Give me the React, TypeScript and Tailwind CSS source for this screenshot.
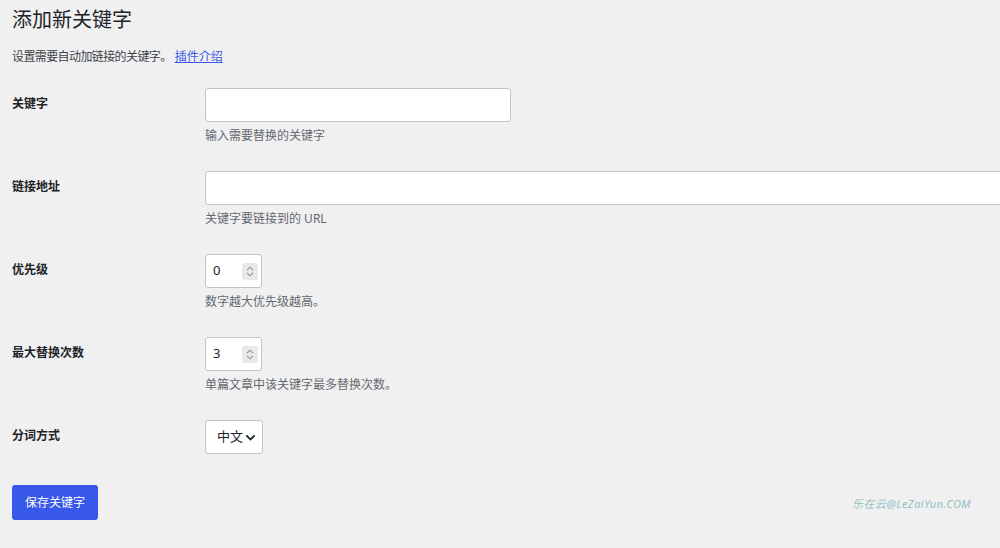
import React from "react";

const font = { fontFamily: '"Noto Sans", "Noto Sans CJK SC", sans-serif' };

function Spinner() {
  return (
    <div className="w-[16px] h-[17px] bg-[#e9e9ec] rounded-[2px] flex flex-col items-center justify-center gap-[1px]">
      <svg width="8" height="5" viewBox="0 0 8 5" fill="none">
        <path d="M1 4.2L4 1.2L7 4.2" stroke="#8c8f94" strokeWidth="1.1" />
      </svg>
      <svg width="8" height="5" viewBox="0 0 8 5" fill="none">
        <path d="M1 0.8L4 3.8L7 0.8" stroke="#8c8f94" strokeWidth="1.1" />
      </svg>
    </div>
  );
}

function NumberBox({ value }: { value: string }) {
  return (
    <div className="w-[57px] h-[34px] bg-white border border-[#c3c4c7] rounded-[3px] flex items-center justify-between pl-[7px] pr-[3px]">
      <span className="text-[13px] text-[#1d2327]">{value}</span>
      <Spinner />
    </div>
  );
}

function Row({ label, children, desc }: { label: string; children: React.ReactNode; desc?: string }) {
  return (
    <div className="grid grid-cols-[193px_1fr]">
      <div className="pt-[21px] text-[12px] leading-[19px] font-semibold text-[#1d2327]">{label}</div>
      <div className="py-[15px]">
        {children}
        {desc && <p className="mt-[9px] text-[12px] leading-[10px] text-[#646970]">{desc}</p>}
      </div>
    </div>
  );
}

export default function App() {
  return (
    <div className="w-[1000px] h-[548px] overflow-hidden bg-[#f0f0f1] pl-[12px] pt-[5px]" style={font}>
      <h1 className="text-[20px] leading-[30px] font-normal text-[#1d2327]">添加新关键字</h1>
      <p className="mt-[12px] text-[12px] leading-[19px] text-[#3c434a]">
        <span className="tracking-[-0.6px]">设置需要自动加链接的关键字。</span> <span className="text-[#3858e9] underline">插件介绍</span>
      </p>
      <div className="mt-[7px]">
        <Row label="关键字" desc="输入需要替换的关键字">
          <div className="w-[306px] h-[34px] bg-white border border-[#c3c4c7] rounded-[3px]" />
        </Row>
        <Row label="链接地址" desc="关键字要链接到的 URL">
          <div className="w-[820px] h-[34px] bg-white border border-[#c3c4c7] rounded-[3px]" />
        </Row>
        <Row label="优先级" desc="数字越大优先级越高。">
          <NumberBox value="0" />
        </Row>
        <Row label="最大替换次数" desc="单篇文章中该关键字最多替换次数。">
          <NumberBox value="3" />
        </Row>
        <Row label="分词方式">
          <div className="w-[58px] h-[34px] bg-white border border-[#c3c4c7] rounded-[3px] flex items-center pl-[11px] gap-[2px]">
            <span className="text-[13px] text-[#1d2327]">中文</span>
            <svg width="11" height="7" viewBox="0 0 11 7" fill="none">
              <path d="M1.3 1.4L5.5 5.4L9.7 1.4" stroke="#1d2327" strokeWidth="1.8" />
            </svg>
          </div>
        </Row>
      </div>
      <div className="mt-[16px] flex items-center justify-between pr-[29px]">
        <button className="w-[86px] h-[35px] bg-[#3858e9] rounded-[3px] text-white text-[12px]">保存关键字</button>
        <span className="mt-[3px] text-[11px] italic text-[#8fc2c2] tracking-[0.45px]">乐在云@LeZaiYun.COM</span>
      </div>
    </div>
  );
}
